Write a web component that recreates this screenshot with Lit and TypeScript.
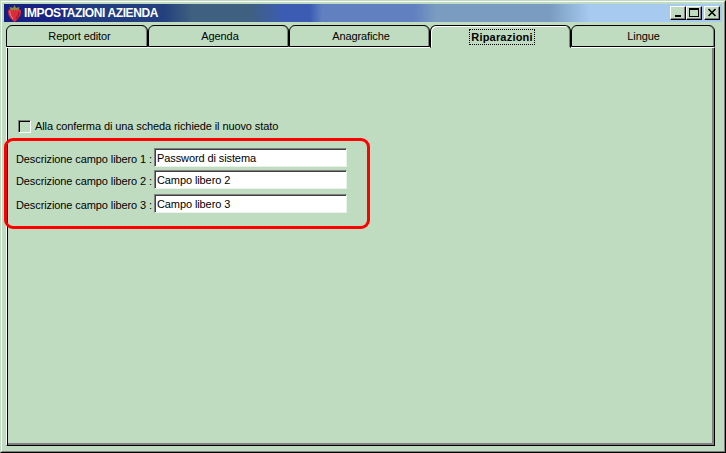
import { LitElement, html, css } from "lit";
import { customElement } from "lit/decorators.js";

@customElement("app-root")
export class AppRoot extends LitElement {
  static styles = css`
    :host { display: block; width: 726px; height: 453px; font-family: "Liberation Sans", Arial, sans-serif; font-size: 11px; letter-spacing: -0.1px; color: #000; overflow: hidden; }
    * { box-sizing: border-box; }
    .window { width: 726px; height: 453px; background: #c0dcc0; border-style: solid; border-width: 1px; border-color: #c0dcc0 #000 #000 #c0dcc0; }
    .frame1 { height: 100%; border-style: solid; border-width: 1px; border-color: #fff #808080 #808080 #fff; padding: 2px; display: flex; flex-direction: column; }
    .title { height: 18px; flex: none; display: flex; align-items: center; padding: 0 2px 0 3px;
      background: linear-gradient(90deg, #141f80 0, #1a2484 52px, #1f3a80 72px, #24407e 160px, #3f6080 188px, #3f6080 246px, #3c5cb4 280px, #3c5cb4 306px, #6080c0 318px, #6080c0 410px, #7a9cc0 432px, #7a9cc0 546px, #a6caf0 586px, #a6caf0 100%); }
    .logo { width: 15px; height: 17px; flex: none; margin-right: 2px; }
    .caption { color: #fff; font-weight: bold; font-size: 12px; letter-spacing: -0.4px; white-space: nowrap; flex: 1; }
    .btn { width: 16px; height: 14px; flex: none; background: #c0dcc0; border-style: solid; border-width: 1px; border-color: #fff #000 #000 #fff; box-shadow: inset -1px -1px 0 #808080; display: flex; }
    .btn svg { display: block; }
    .btn.close { margin-left: 2px; }
    .tabs { display: flex; margin: 3px 0 0 2px; height: 22px; flex: none; position: relative; z-index: 1; }
    .tab { width: 141px; height: 22px; border-style: solid; border-width: 1px; border-color: #000; border-radius: 6px 6px 0 0; background: #c0dcc0; text-align: center; padding-left: 3px; line-height: 20px; box-shadow: inset -1px 0 0 #808080; }
    .tab.first { width: 142px; padding-left: 5px; }
    .tab.last { width: 144px; padding-left: 1px; }
    .tab.active { box-shadow: inset 1px 1px 0 #fff, inset -1px 0 0 #808080; border-bottom-color: #c0dcc0; height: 23px; font-weight: bold; letter-spacing: 0.2px; padding-top: 3px; line-height: 16px; }
    .focus { display: inline-block; outline: 1px dotted #000; outline-offset: 0; padding: 0 1px; height: 14px; line-height: 14px; }
    .page { flex: 1; margin: 0 7px 3px 2px; border-style: solid; border-width: 1px; border-color: #fff #000 #000 #fff; box-shadow: inset 1px 0 0 #000, inset -2px -2px 0 #808080; background: #c0dcc0; padding: 71px 0 0 2px; }
    .check { display: flex; align-items: center; height: 14px; margin-left: 9px; gap: 4px; }
    .box { width: 13px; height: 13px; border-style: solid; border-width: 1px; border-color: #808080 #fff #fff #808080; background: #c0dcc0; box-shadow: inset 1px 1px 0 #000; }
    .annot { width: 366px; height: 91px; margin: 5px 0 0 -5px; border: 3px solid #f00; border-radius: 9px; padding: 7px 0 0 9px; display: flex; flex-direction: column; }
    .row { display: flex; align-items: center; height: 19px; }
    .row + .row { margin-top: 3px; }
    .row.third { margin-top: 5px; }
    .label { width: 138px; white-space: nowrap; flex: none; padding-top: 2px; }
    .field { width: 193px; height: 19px; background: #fff; border-style: solid; border-width: 1px; border-color: #808080 #e8f4e8 #e8f4e8 #808080; box-shadow: inset 1px 1px 0 #404040; padding-left: 2px; line-height: 19px; white-space: nowrap; }
  `;
  render() {
    return html`<div class="window"><div class="frame1">
      <div class="title">
        <svg class="logo" viewBox="0 0 15 17">
          <path d="M1 7 Q1 3.500 4.500 3.500 L10.500 3.500 Q14 3.500 14 7 Q14 12 7.500 17 Q1 12 1 7Z" fill="#dc2c3c"/>
          <path d="M2.800 6 Q2.500 10 6 14" fill="none" stroke="#f08090" stroke-width="1"/>
          <path d="M12 7 Q12 11 9 14" fill="none" stroke="#a81c2c" stroke-width="1.500"/>
          <path d="M2.500 2 L6 3 L7.500 0 L9 3 L12.500 2 L11 5.500 L8 4.500 L7.500 6 L7 4.500 L4 5.500Z" fill="#8c8c40"/>
        </svg>
        <span class="caption">IMPOSTAZIONI AZIENDA</span>
        <div class="btn"><svg width="14" height="12"><rect x="4" y="8" width="6" height="2" fill="#000"/></svg></div>
        <div class="btn"><svg width="14" height="12"><rect x="2.500" y="1.500" width="9" height="8" fill="none" stroke="#000"/><rect x="2" y="1" width="10" height="2" fill="#000"/></svg></div>
        <div class="btn close"><svg width="14" height="12"><path d="M3.500 2l7 7M10.500 2l-7 7" stroke="#000" stroke-width="1.600"/></svg></div>
      </div>
      <div class="tabs">
        <div class="tab first">Report editor</div>
        <div class="tab">Agenda</div>
        <div class="tab">Anagrafiche</div>
        <div class="tab active"><span class="focus">Riparazioni</span></div>
        <div class="tab last">Lingue</div>
      </div>
      <div class="page">
        <div class="check"><div class="box"></div><span>Alla conferma di una scheda richiede il nuovo stato</span></div>
        <div class="annot">
          <div class="row"><span class="label">Descrizione campo libero 1 :</span><div class="field">Password di sistema</div></div>
          <div class="row"><span class="label">Descrizione campo libero 2 :</span><div class="field">Campo libero 2</div></div>
          <div class="row third"><span class="label">Descrizione campo libero 3 :</span><div class="field">Campo libero 3</div></div>
        </div>
      </div>
    </div></div>`;
  }
}
